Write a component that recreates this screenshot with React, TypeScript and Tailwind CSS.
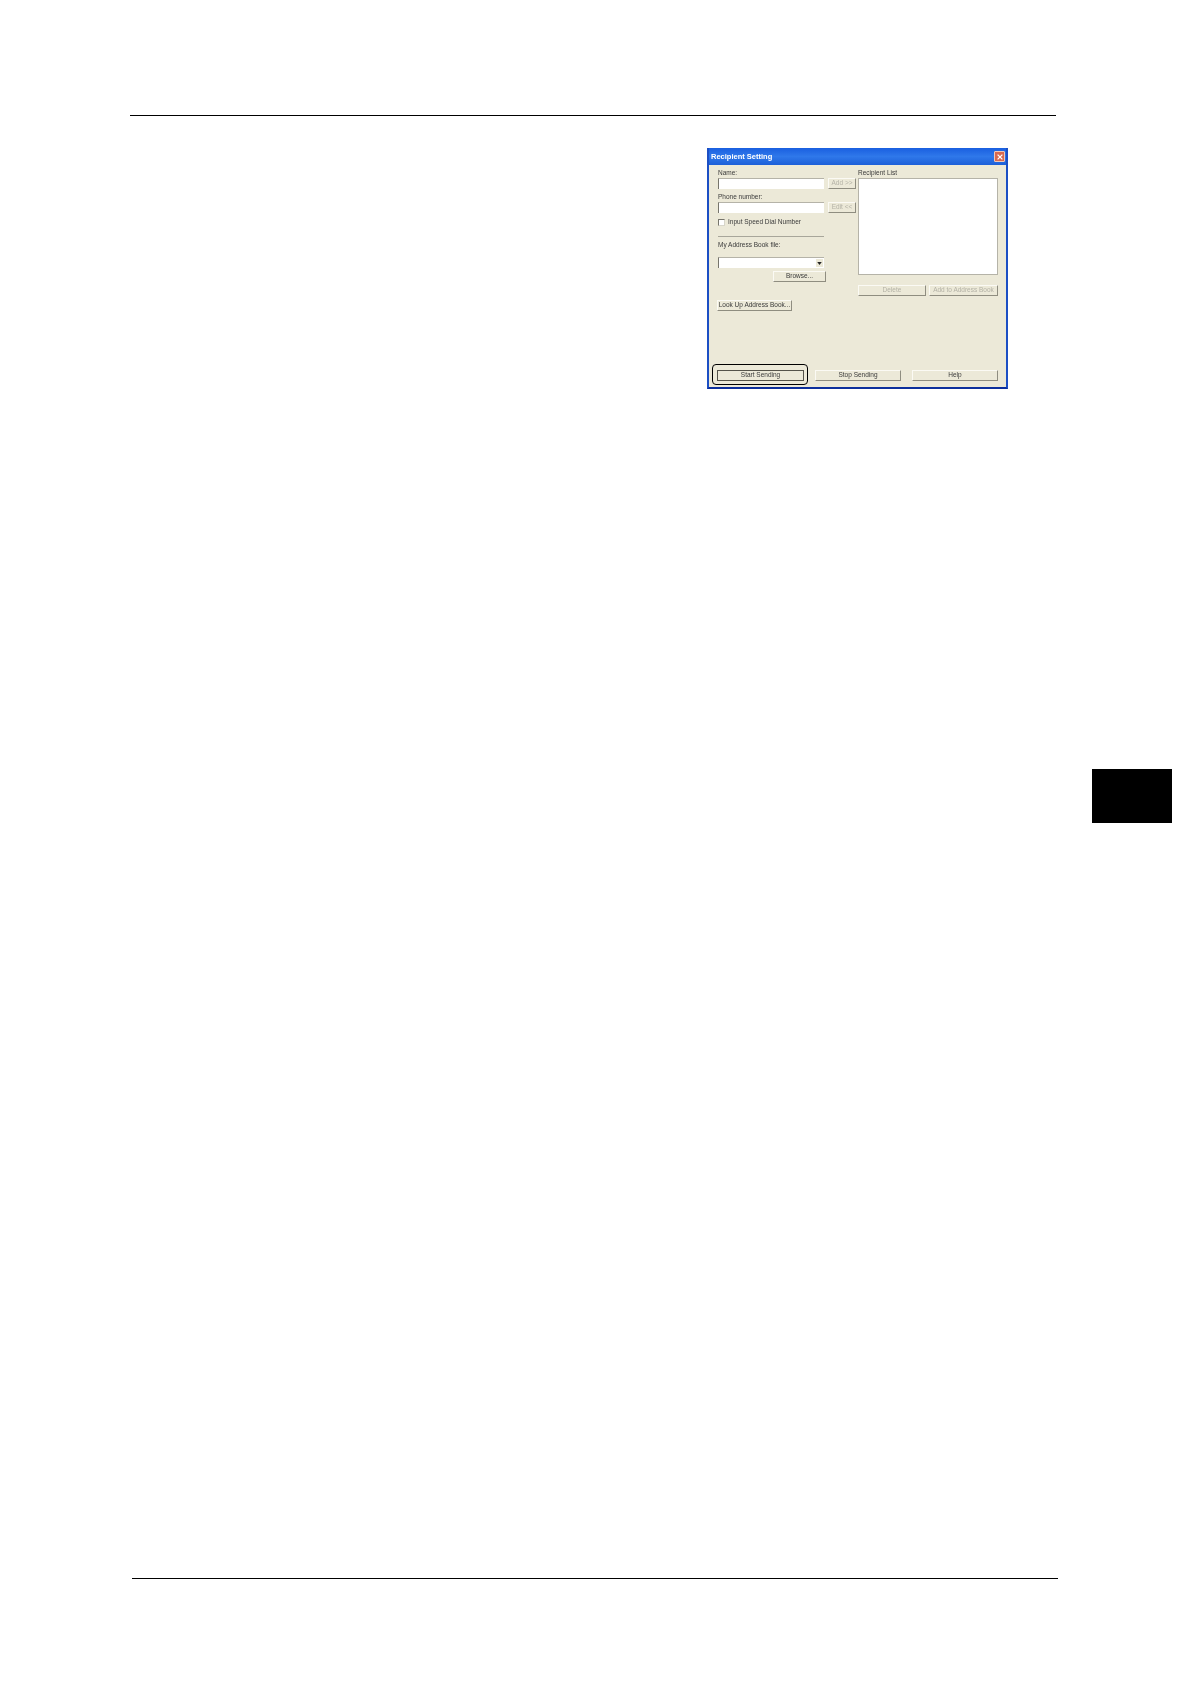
function XpButton({ label, className, disabled, focused }: { label: string; className: string; disabled?: boolean; focused?: boolean }) {
  return (
    <div
      className={`flex items-center justify-center h-[11px] bg-[#ece9d8] border text-[6.5px] leading-none whitespace-nowrap ${
        focused ? 'border-[#55534a]' : 'border-t-[#fbfaf4] border-l-[#fbfaf4] border-r-[#8f8d80] border-b-[#8f8d80]'
      } ${disabled ? 'text-[#b4b2a6]' : 'text-[#3a3a3a]'} ${className}`}
    >
      {label}
    </div>
  )
}

function Field({ label }: { label: string }) {
  return (
    <div className="flex flex-col">
      <div className="h-[8px] text-[6.5px] leading-[8px] text-[#3a3a3a] whitespace-nowrap">{label}</div>
      <div className="mt-[1px] h-[11px] w-[106px] bg-white border-t border-l border-t-[#b5b3a8] border-l-[#77756c]" />
    </div>
  )
}

function RecipientDialog() {
  return (
    <div className="relative w-[301px] h-[241px] ml-[707px] border-[2px] border-t-0 border-[#1c4fc4] border-b-[#0c2f9c] bg-[#ece9d8] font-['Liberation_Sans',sans-serif] blur-[0.45px]">
      {/* title bar */}
      <div className="flex items-center justify-between h-[17px] pl-[2px] pr-[1px] bg-gradient-to-b from-[#1a5fe0] via-[#2f78ea] to-[#1c5fd8]">
        <span className="pt-[1px] text-[7.5px] font-bold text-white">Recipient Setting</span>
        <div className="flex items-center justify-center w-[11px] h-[11px] rounded-[1px] bg-[#d9694f] border border-[#f0c8b8]">
          <svg viewBox="0 0 10 10" className="w-[8px] h-[8px]">
            <path d="M2 2 L8 8 M8 2 L2 8" stroke="#ffffff" strokeWidth="1.6" />
          </svg>
        </div>
      </div>

      {/* body */}
      <div className="flex pl-[9px] pt-[4px]">
        <div className="flex flex-col w-[140px]">
          <div className="flex flex-col gap-[1px]">
            <div className="flex items-end">
              <Field label="Name:" />
              <XpButton label="Add >>" disabled className="ml-[4px] w-[28px]" />
            </div>
            <div className="flex items-end mt-[3px]">
              <Field label="Phone number:" />
              <XpButton label="Edit <<" disabled className="ml-[4px] w-[28px]" />
            </div>
          </div>

          <div className="flex items-center mt-[5px] h-[8px]">
            <div className="w-[7px] h-[7px] bg-white border-t border-l border-t-[#77756c] border-l-[#77756c] border-r border-b border-r-[#d8d6ca] border-b-[#d8d6ca]" />
            <span className="ml-[3px] text-[6.5px] leading-none text-[#3a3a3a] whitespace-nowrap">Input Speed Dial Number</span>
          </div>

          <div className="mt-[10px] w-[106px] h-[1px] bg-[#a8a69a]" />

          <div className="mt-[4px] h-[8px] text-[6.5px] leading-[8px] text-[#3a3a3a]">My Address Book file:</div>

          <div className="flex items-center justify-end mt-[8px] w-[106px] h-[11px] pr-[1px] bg-white border-t border-l border-t-[#b5b3a8] border-l-[#77756c]">
            <div className="flex items-center justify-center w-[7px] h-[8px] bg-[#ece9d8]">
              <svg viewBox="0 0 6 4" className="w-[5px] h-[3px]">
                <path d="M0 0 H6 L3 4 Z" fill="#222222" />
              </svg>
            </div>
          </div>

          <XpButton label="Browse..." className="mt-[3px] ml-[55px] w-[53px]" />
          <XpButton label="Look Up Address Book..." className="mt-[18px] -ml-[1px] w-[75px]" />
        </div>

        <div className="flex flex-col w-[140px]">
          <div className="h-[8px] text-[6.5px] leading-[8px] text-[#3a3a3a]">Recipient List</div>
          <div className="mt-[1px] h-[97px] bg-white border border-[#b5b3a8]" />
          <div className="flex justify-between mt-[10px]">
            <XpButton label="Delete" disabled className="w-[68px]" />
            <XpButton label="Add to Address Book" disabled className="w-[69px]" />
          </div>
        </div>
      </div>

      {/* bottom buttons */}
      <div className="absolute left-[8px] top-[222px] flex w-[281px] justify-between">
        <XpButton label="Start Sending" focused className="w-[87px]" />
        <XpButton label="Stop Sending" className="w-[86px]" />
        <XpButton label="Help" className="w-[86px]" />
      </div>

      {/* highlight round Start Sending */}
      <div className="absolute left-[3px] top-[216px] w-[96px] h-[21px] rounded-[4px] border-[1.5px] border-black" />
    </div>
  )
}

export default function App() {
  return (
    <div className="w-[1190px] h-[1684px] bg-white overflow-hidden">
      <div className="pt-[115px]">
        <div className="ml-[130px] w-[926px] h-[1px] bg-black" />
      </div>

      <div className="mt-[32px]">
        <RecipientDialog />
      </div>

      {/* chapter tab */}
      <div className="mt-[380px] ml-[1092px] w-[80px] h-[54px] bg-black" />

      <div className="mt-[755px] ml-[132px] w-[926px] h-[1px] bg-black" />
    </div>
  )
}
